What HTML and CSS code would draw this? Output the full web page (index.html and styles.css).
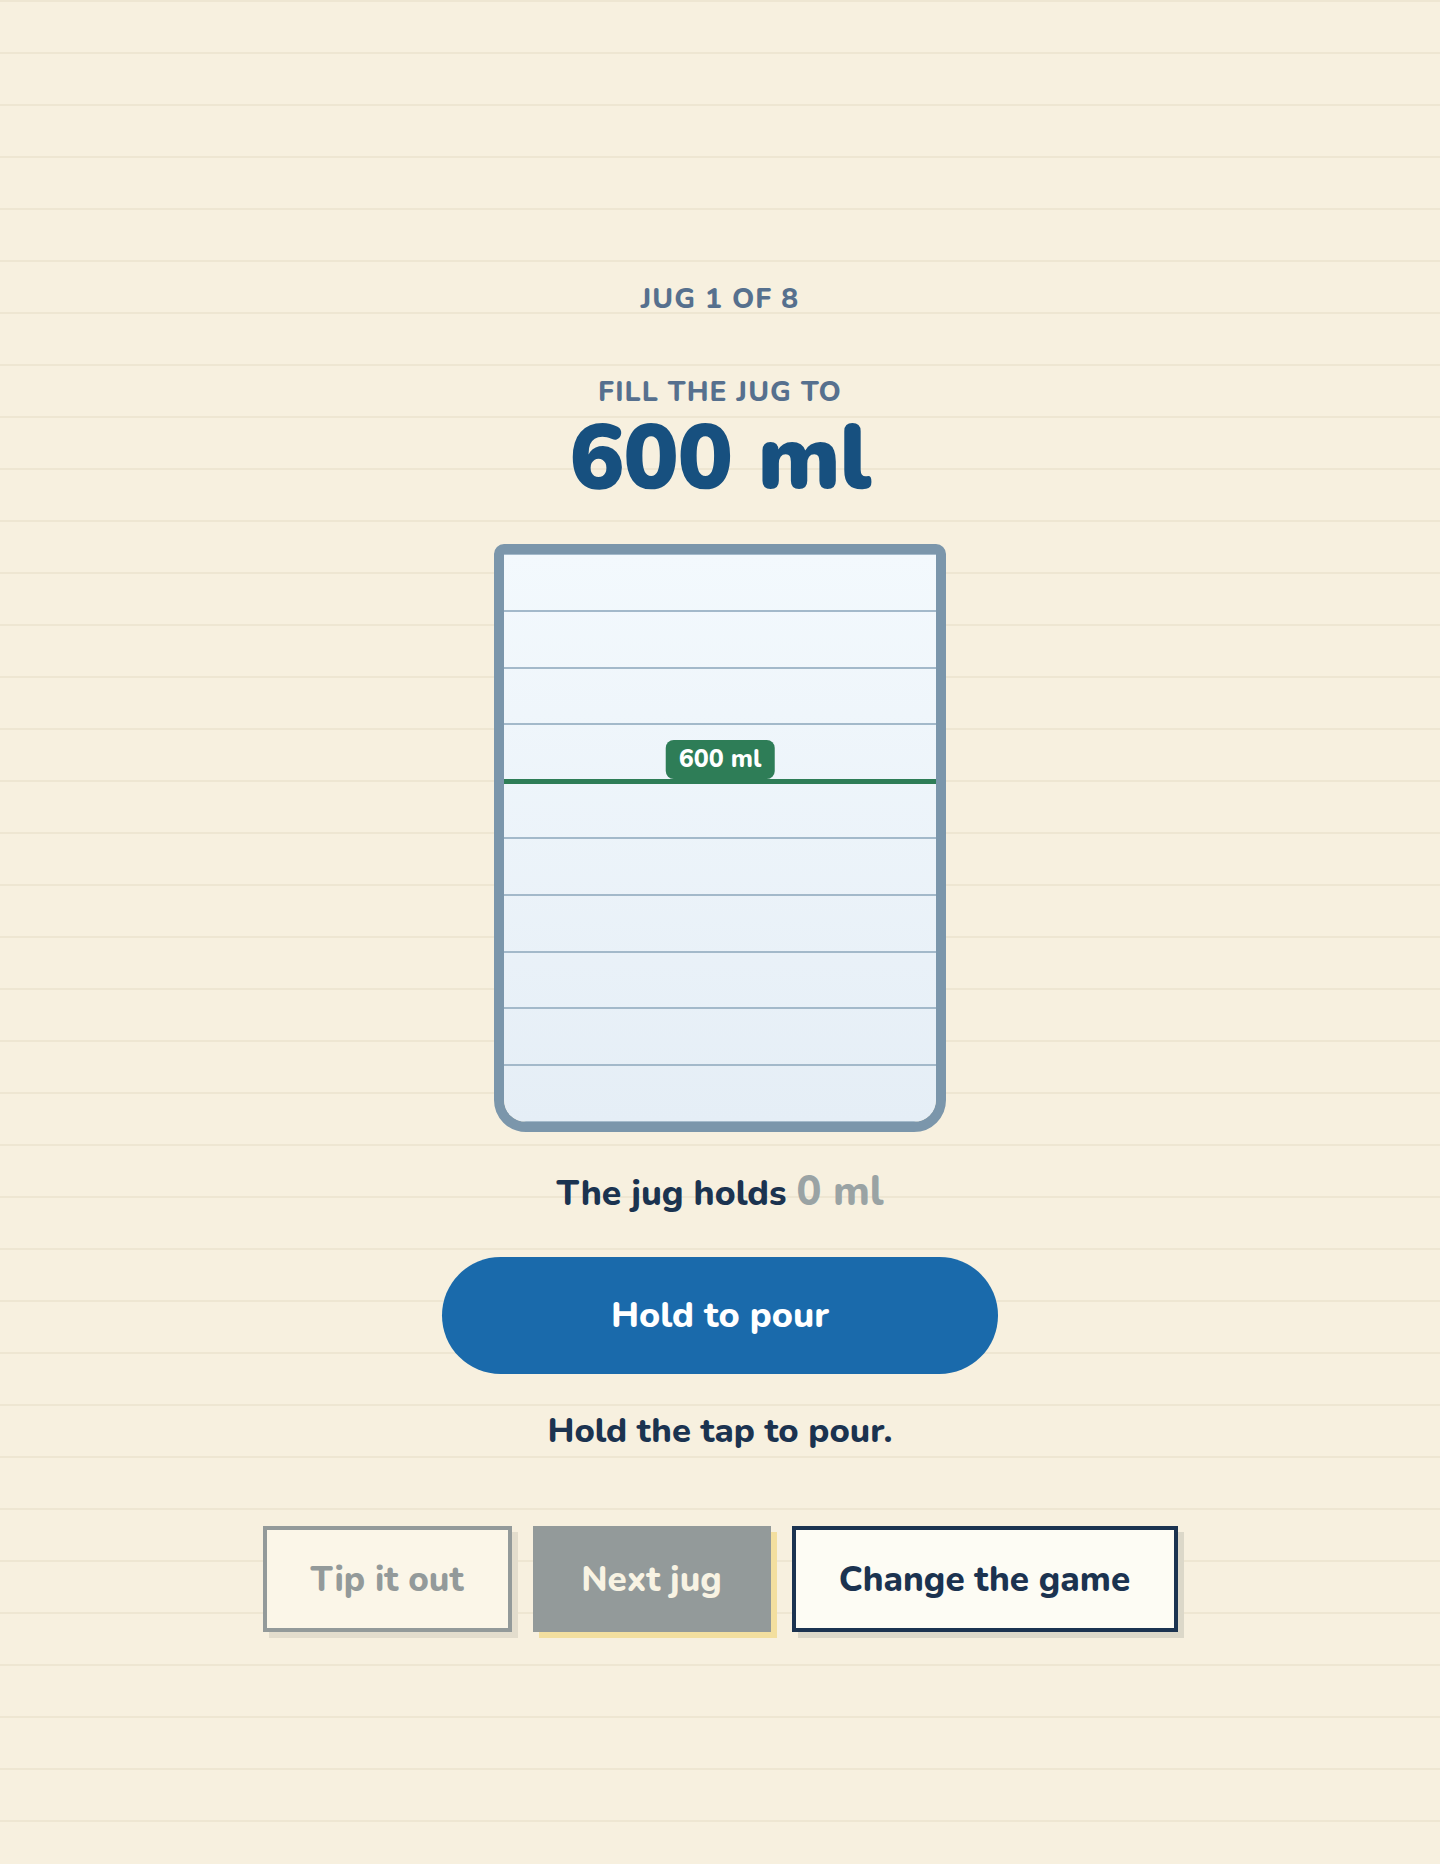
FILE: index.html
```html
<!DOCTYPE html>
<html lang="en">
<head>
<meta charset="utf-8">
<title>Fill the jug</title>
<link rel="stylesheet" href="styles.css">
</head>
<body>
<main class="game">
  <p class="eyebrow">Jug 1 of 8</p>
  <p class="prompt">Fill the jug to</p>
  <h1 class="target">600 ml</h1>

  <div class="jug">
    <div class="jug-inside">
      <div class="mark" style="top: 40%">
        <span class="mark-label">600 ml</span>
      </div>
    </div>
  </div>

  <p class="reading"><span>The jug holds</span> <span class="reading-value">0 ml</span></p>

  <button class="pour" type="button">Hold to pour</button>

  <p class="hint">Hold the tap to pour.</p>

  <div class="actions">
    <button class="action action-tip" type="button" disabled>Tip it out</button>
    <button class="action action-next" type="button" disabled>Next jug</button>
    <button class="action action-change" type="button">Change the game</button>
  </div>
</main>
</body>
</html>
```

FILE: styles.css
```css
* {
  box-sizing: border-box;
}

html,
body {
  margin: 0;
  padding: 0;
}

body {
  min-height: 1864px;
  font-family: Nunito, Lato, "Noto Sans", sans-serif;
  color: #1b3350;
  background-color: #f7f0df;
  background-image: repeating-linear-gradient(
    to bottom,
    #eee6d2 0,
    #eee6d2 2px,
    transparent 2px,
    transparent 52px
  );
}

.game {
  display: flex;
  flex-direction: column;
  align-items: center;
  padding-top: 285px;
}

.eyebrow,
.prompt {
  margin: 0;
  font-size: 28px;
  line-height: 1;
  font-weight: 800;
  letter-spacing: 0.04em;
  text-transform: uppercase;
  color: #56708e;
}

.prompt {
  margin-top: 65px;
}

.target {
  margin: 6px 0 0;
  font-size: 92px;
  line-height: 1;
  font-weight: 900;
  color: #17507f;
  letter-spacing: -0.01em;
}

/* the measuring jug */
.jug {
  margin-top: 40px;
  width: 452px;
  height: 588px;
  border: 10px solid #7b96ab;
  border-radius: 10px 10px 32px 32px;
  overflow: hidden;
}

/* glass body with a graduation every 100 ml */
.jug-inside {
  position: relative;
  height: 100%;
  border-radius: 0 0 22px 22px;
  background-image:
    repeating-linear-gradient(
      to bottom,
      transparent 0,
      transparent 54.8px,
      #a3b9ca 54.8px,
      #a3b9ca 56.8px
    ),
    linear-gradient(to bottom, #f3f9fd, #e5eef6);
  background-position: 0 1px, 0 0;
}

.mark {
  position: absolute;
  left: 0;
  right: 0;
  height: 5px;
  margin-top: -2.5px;
  background: #2e7d57;
}

.mark-label {
  position: absolute;
  left: 50%;
  bottom: 5px;
  transform: translateX(-50%);
  padding: 0 13px;
  height: 39px;
  display: flex;
  align-items: center;
  border-radius: 8px;
  background: #2e7d57;
  color: #ffffff;
  font-size: 25px;
  font-weight: 800;
  white-space: nowrap;
}

.reading {
  margin: 39px 0 0;
  display: flex;
  align-items: baseline;
  gap: 10px;
  font-size: 35.5px;
  line-height: 1;
  font-weight: 800;
  color: #1b3350;
}

.reading-value {
  font-size: 41.5px;
  color: #9aa3a4;
}

.pour {
  margin-top: 44px;
  width: 556px;
  height: 117px;
  border: 0;
  border-radius: 999px;
  background: #1a6aab;
  color: #ffffff;
  font-family: inherit;
  font-size: 36px;
  font-weight: 800;
  cursor: pointer;
}

.hint {
  margin: 40px 0 0;
  font-size: 34.6px;
  line-height: 1;
  font-weight: 800;
  color: #1b3350;
}

.actions {
  margin-top: 78px;
  display: flex;
  gap: 21px;
}

.action {
  height: 106px;
  padding: 0 40px;
  border: 4px solid #1b3350;
  font-family: inherit;
  font-size: 35px;
  font-weight: 800;
  line-height: 1;
  white-space: nowrap;
  cursor: pointer;
}

.action-tip {
  width: 249px;
  border-color: #939a9a;
  background: #fbf6e8;
  color: #939a9a;
  box-shadow: 6px 6px 0 #e3ddcd;
}

.action-next {
  width: 238px;
  border-color: #939a9a;
  background: #939a9a;
  color: #f8f3e3;
  box-shadow: 6px 6px 0 #f3df9f;
}

.action-change {
  width: 386px;
  background: #fdfcf4;
  color: #1b3350;
  box-shadow: 6px 6px 0 #dcd8c9;
}
```
